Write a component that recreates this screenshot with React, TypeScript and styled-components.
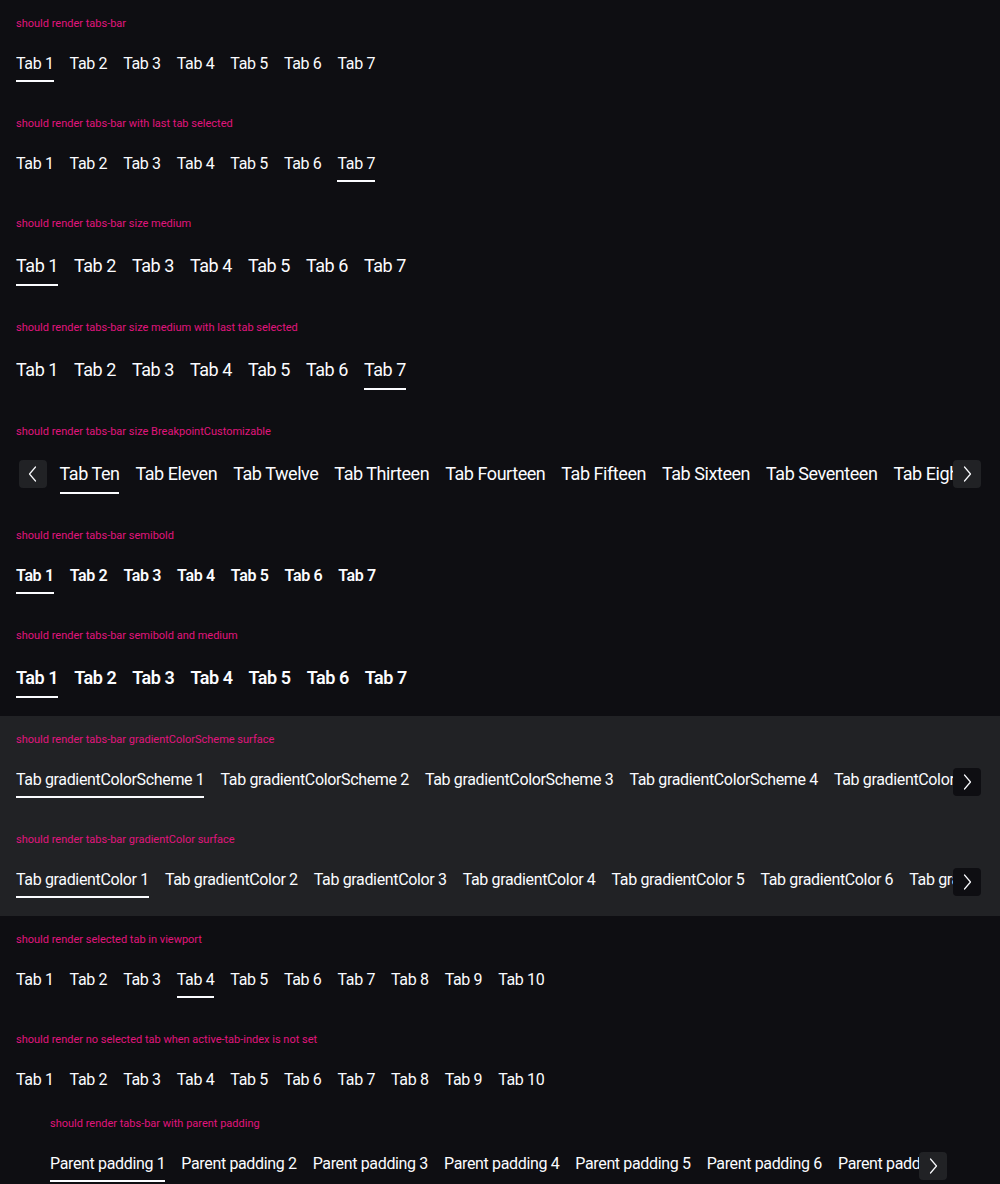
import React, { useLayoutEffect, useRef, useState } from "react";
import styled, { createGlobalStyle, css } from "styled-components";

const colors = {
  background: "#0e0e12",
  surface: "#212225",
  primary: "#fbfcff",
  label: "#e0157d",
};

const GlobalStyle = createGlobalStyle`
  html, body {
    margin: 0;
    background: ${colors.background};
  }
  * {
    box-sizing: border-box;
  }
`;

type Size = "small" | "medium";
type Weight = "regular" | "semibold";

interface TabsBarProps {
  tabs: string[];
  activeIndex?: number;
  size?: Size;
  weight?: Weight;
  surface?: boolean;
}

function Chevron({ direction }: { direction: "left" | "right" }) {
  return (
    <svg width="20" height="20" viewBox="0 0 20 20" fill="none">
      <path
        d={direction === "right" ? "M7.5 3 L13.5 10 L7.5 17" : "M12.5 3 L6.5 10 L12.5 17"}
        stroke={colors.primary}
        strokeWidth="1.2"
        strokeLinecap="round"
        strokeLinejoin="round"
      />
    </svg>
  );
}

function TabsBar(props: TabsBarProps) {
  const { tabs, activeIndex, size = "small", weight = "regular", surface } = props;
  const scrollRef = useRef<HTMLDivElement>(null);
  const [scroll, setScroll] = useState({ prev: false, next: false });

  // keep the selected tab in view, then show the arrows where content is hidden
  useLayoutEffect(() => {
    const el = scrollRef.current;
    if (!el) return;
    const overflows = el.scrollWidth > el.clientWidth + 1;
    if (overflows && activeIndex !== undefined && activeIndex > 0) {
      const active = el.children[0].children[activeIndex] as HTMLElement;
      el.scrollLeft = active.offsetLeft - 44;
    }
    setScroll({
      prev: el.scrollLeft > 0,
      next: el.scrollLeft + el.clientWidth < el.scrollWidth - 1,
    });
  }, [activeIndex]);

  return (
    <StyledBar>
      <StyledScroller ref={scrollRef}>
        <StyledTabList>
          {tabs.map((tab, i) => (
            <StyledTab key={tab} $size={size} $weight={weight} $active={i === activeIndex}>
              {tab}
            </StyledTab>
          ))}
        </StyledTabList>
      </StyledScroller>
      {scroll.prev && (
        <StyledScrollArea $side="left" $surface={surface}>
          <StyledScrollButton $surface={surface} aria-label="previous">
            <Chevron direction="left" />
          </StyledScrollButton>
        </StyledScrollArea>
      )}
      {scroll.next && (
        <StyledScrollArea $side="right" $surface={surface}>
          <StyledScrollButton $surface={surface} aria-label="next">
            <Chevron direction="right" />
          </StyledScrollButton>
        </StyledScrollArea>
      )}
    </StyledBar>
  );
}

const range = (label: string, count: number) =>
  Array.from({ length: count }, (_, i) => `${label} ${i + 1}`);

const words = [
  "One", "Two", "Three", "Four", "Five", "Six", "Seven", "Eight", "Nine", "Ten",
  "Eleven", "Twelve", "Thirteen", "Fourteen", "Fifteen", "Sixteen", "Seventeen",
  "Eighteen", "Nineteen", "Twenty",
];

export default function App() {
  const seven = range("Tab", 7);
  const ten = range("Tab", 10);

  return (
    <>
      <GlobalStyle />
      <StyledPage>
        <StyledSection>
          <StyledLabel>should render tabs-bar</StyledLabel>
          <TabsBar tabs={seven} activeIndex={0} />
        </StyledSection>
        <StyledSection>
          <StyledLabel>should render tabs-bar with last tab selected</StyledLabel>
          <TabsBar tabs={seven} activeIndex={6} />
        </StyledSection>
        <StyledSection>
          <StyledLabel>should render tabs-bar size medium</StyledLabel>
          <TabsBar tabs={seven} activeIndex={0} size="medium" />
        </StyledSection>
        <StyledSection>
          <StyledLabel>should render tabs-bar size medium with last tab selected</StyledLabel>
          <TabsBar tabs={seven} activeIndex={6} size="medium" />
        </StyledSection>
        <StyledSection>
          <StyledLabel>should render tabs-bar size BreakpointCustomizable</StyledLabel>
          <TabsBar tabs={words.map((w) => `Tab ${w}`)} activeIndex={9} size="medium" />
        </StyledSection>
        <StyledSection>
          <StyledLabel>should render tabs-bar semibold</StyledLabel>
          <TabsBar tabs={seven} activeIndex={0} weight="semibold" />
        </StyledSection>
        <StyledSection>
          <StyledLabel>should render tabs-bar semibold and medium</StyledLabel>
          <TabsBar tabs={seven} activeIndex={0} size="medium" weight="semibold" />
        </StyledSection>
        <StyledSection $surface>
          <StyledLabel>should render tabs-bar gradientColorScheme surface</StyledLabel>
          <TabsBar tabs={range("Tab gradientColorScheme", 7)} activeIndex={0} surface />
        </StyledSection>
        <StyledSection $surface>
          <StyledLabel>should render tabs-bar gradientColor surface</StyledLabel>
          <TabsBar tabs={range("Tab gradientColor", 7)} activeIndex={0} surface />
        </StyledSection>
        <StyledSection>
          <StyledLabel>should render selected tab in viewport</StyledLabel>
          <TabsBar tabs={ten} activeIndex={3} />
        </StyledSection>
        <StyledSection>
          <StyledLabel>should render no selected tab when active-tab-index is not set</StyledLabel>
          <TabsBar tabs={ten} />
        </StyledSection>
        <StyledSection $parentPadding>
          <StyledLabel>should render tabs-bar with parent padding</StyledLabel>
          <TabsBar tabs={range("Parent padding", 7)} activeIndex={0} />
        </StyledSection>
      </StyledPage>
    </>
  );
}

const StyledPage = styled.main`
  display: flex;
  flex-direction: column;
  background: ${colors.background};
  min-height: 1184px;
`;

const StyledSection = styled.section<{ $surface?: boolean; $parentPadding?: boolean }>`
  padding: 16px;
  background: ${(p) => (p.$surface ? colors.surface : colors.background)};
  ${(p) =>
    p.$parentPadding &&
    css`
      padding: 0 50px 16px;
    `}
`;

const StyledLabel = styled.p`
  margin: 0 0 20px;
  font-family: Roboto, sans-serif;
  font-size: 11px;
  line-height: 16px;
  color: ${colors.label};
`;

const StyledBar = styled.div`
  position: relative;
`;

const StyledScroller = styled.div`
  overflow: hidden;
`;

const StyledTabList = styled.div`
  display: flex;
  gap: 16px;
  white-space: nowrap;
`;

const StyledTab = styled.button<{ $size: Size; $weight: Weight; $active: boolean }>`
  position: relative;
  flex-shrink: 0;
  margin: 0;
  padding: 0 0 8px;
  border: none;
  background: none;
  cursor: pointer;
  font-family: Roboto, "Liberation Sans", sans-serif;
  font-size: ${(p) => (p.$size === "medium" ? "18px" : "16px")};
  line-height: ${(p) => (p.$size === "medium" ? "28px" : "24px")};
  letter-spacing: ${(p) => (p.$size === "medium" ? "-0.45px" : "-0.35px")};
  font-weight: ${(p) => (p.$weight === "semibold" ? 600 : 400)};
  color: ${colors.primary};

  ${(p) =>
    p.$active &&
    css`
      &::after {
        content: "";
        position: absolute;
        left: 0;
        right: 0;
        bottom: 2px;
        height: 2px;
        background: ${colors.primary};
      }
    `}
`;

const StyledScrollArea = styled.div<{ $side: "left" | "right"; $surface?: boolean }>`
  position: absolute;
  top: 0;
  bottom: 0;
  ${(p) => (p.$side === "left" ? "left: 0; padding-left: 3px;" : "right: 0; padding-right: 3px;")}
  display: flex;
  align-items: flex-start;
  background: ${(p) => (p.$surface ? colors.surface : colors.background)};
`;

const StyledScrollButton = styled.button<{ $surface?: boolean }>`
  width: 28px;
  height: 28px;
  padding: 0;
  display: flex;
  align-items: center;
  justify-content: center;
  border: none;
  border-radius: 4px;
  cursor: pointer;
  background: ${(p) => (p.$surface ? colors.background : colors.surface)};
`;
